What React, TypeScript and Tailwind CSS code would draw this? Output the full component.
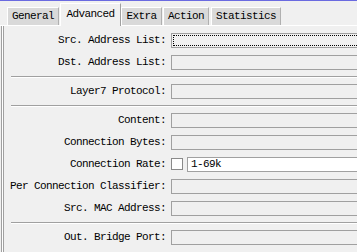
import React from "react";

// Firewall rule "Advanced" tab, classic Windows look.
const tabs = [
  { name: "General", w: "w-[52px]", ml: "ml-[7px]" },
  { name: "Advanced", w: "w-[61px]", ml: "ml-[1px]", active: true },
  { name: "Extra", w: "w-[41px]", ml: "ml-0" },
  { name: "Action", w: "w-[46px]", ml: "ml-[1px]" },
  { name: "Statistics", w: "w-[70px]", ml: "ml-[2px]" },
];

type Row = { label: string; kind?: "focus" | "rate" } | "sep";

const rows: Row[] = [
  { label: "Src. Address List:", kind: "focus" },
  { label: "Dst. Address List:" },
  "sep",
  { label: "Layer7 Protocol:" },
  "sep",
  { label: "Content:" },
  { label: "Connection Bytes:" },
  { label: "Connection Rate:", kind: "rate" },
  { label: "Per Connection Classifier:" },
  { label: "Src. MAC Address:" },
  "sep",
  { label: "Out. Bridge Port:" },
  { label: "" },
];

function Field({ focus }: { focus?: boolean }) {
  return (
    <div className="h-[15px] w-[220px] shrink-0 border border-[#a0a0a0] bg-[#f0f0f0] p-[1px]">
      {focus && <div className="h-full w-full border border-dotted border-black" />}
    </div>
  );
}

export default function App() {
  return (
    <div
      className="relative h-[252px] w-[357px] overflow-hidden bg-[#f0f0f0] text-[11px] leading-none tracking-[-0.6px] text-black"
      style={{ fontFamily: '"Liberation Mono", "DejaVu Sans Mono", monospace' }}
    >
      <div className="h-px w-full bg-[#6a6ae0]" />
      {/* tab strip */}
      <div className="flex h-[24px] items-end">
        {tabs.map((t) =>
          t.active ? (
            <div
              key={t.name}
              className={`${t.w} ${t.ml} relative z-10 -mb-px flex h-[23px] items-center justify-center border-l border-t border-r border-l-white border-t-white border-r-[#a0a0a0] bg-[#f0f0f0] pb-[2px]`}
            >
              {t.name}
            </div>
          ) : (
            <div
              key={t.name}
              className={`${t.w} ${t.ml} flex h-[18px] items-center justify-center border-l border-t border-r border-l-white border-t-white border-r-[#b0b0b0] bg-[#d9d9d9]`}
            >
              {t.name}
            </div>
          )
        )}
      </div>
      {/* panel */}
      <div className="flex h-full border-t border-white">
        <div className="ml-px w-[3px] shrink-0 border-l border-r border-[#a0a0a0] bg-white" />
        <div className="flex flex-1 flex-col pt-[3px]">
          {rows.map((r, i) =>
            r === "sep" ? (
              <div key={i} className="pt-[3px] pb-[2px] pl-[7px]">
                <div className="h-px bg-[#a0a0a0]" />
                <div className="h-px bg-white" />
              </div>
            ) : (
              <div key={i} className="flex h-[22px] items-center">
                <div className="w-[167px] shrink-0 pr-[5px] text-right whitespace-nowrap">{r.label}</div>
                {r.kind === "rate" ? (
                  <div className="flex items-center">
                    <div className="h-[12px] w-[12px] shrink-0 border border-[#8a8a8a] bg-white" />
                    <div className="ml-[4px] flex h-[15px] w-[200px] items-center border border-[#a0a0a0] bg-white pl-[3px]">
                      1-69k
                    </div>
                  </div>
                ) : (
                  <Field focus={r.kind === "focus"} />
                )}
              </div>
            )
          )}
        </div>
      </div>
    </div>
  );
}
